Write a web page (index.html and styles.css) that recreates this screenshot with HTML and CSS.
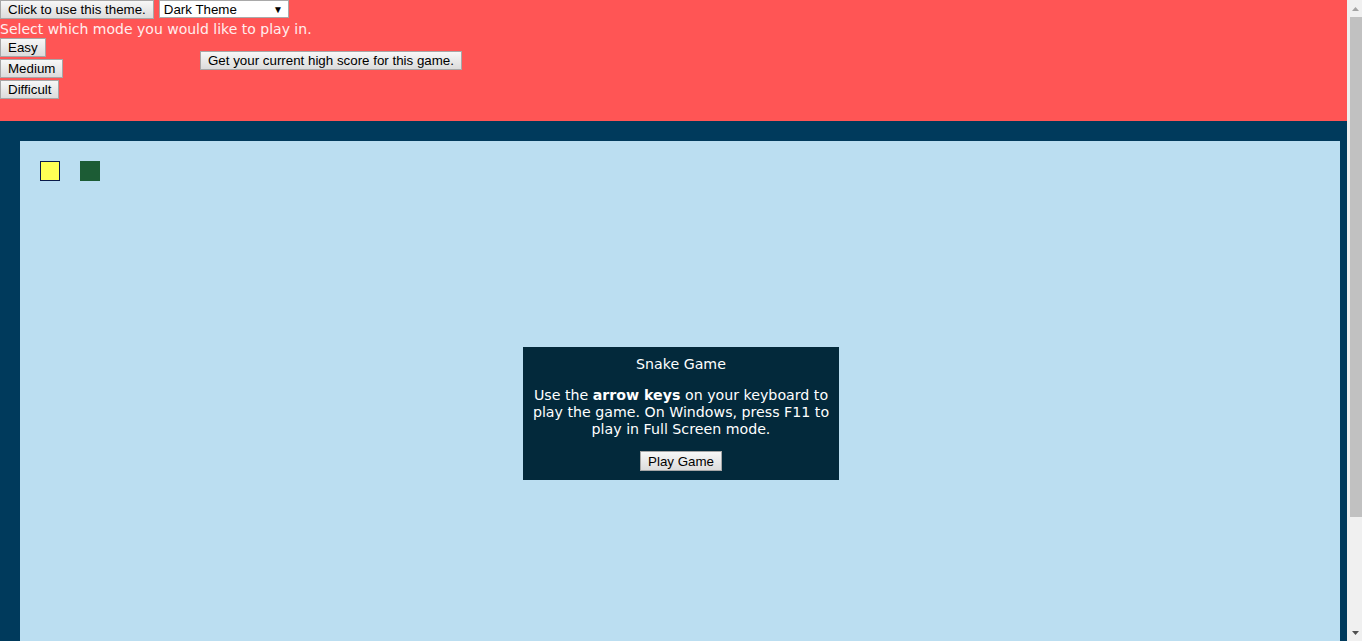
FILE: index.html
```html
<!DOCTYPE html>
<html>
<head>
<meta charset="utf-8">
<title>Snake Game</title>
<link rel="stylesheet" href="styles.css">
</head>
<body>
<div class="page">
<header class="top">
  <div class="theme-row">
    <button class="btn">Click to use this theme.</button>
    <div class="select"><span>Dark Theme</span><span class="arrow">&#9660;</span></div>
  </div>
  <div class="prompt">Select which mode you would like to play in.</div>
  <div class="modes">
    <div class="mode-list">
      <button class="btn">Easy</button>
      <button class="btn">Medium</button>
      <button class="btn">Difficult</button>
    </div>
    <button class="btn score-btn">Get your current high score for this game.</button>
  </div>
</header>
<main class="frame">
  <div class="board">
    <div class="cell food"></div>
    <div class="cell snake"></div>
  </div>
  <div class="dialog">
    <div class="dialog-title">Snake Game</div>
    <p class="dialog-text">Use the <b>arrow keys</b> on your keyboard to play the game. On Windows, press F11 to play in Full Screen mode.</p>
    <button class="btn">Play Game</button>
  </div>
</main>
</div>
<div class="scrollbar">
  <div class="sb-btn"><svg width="7" height="4" viewBox="0 0 7 4"><polygon points="0,4 3.5,0 7,4" fill="#a3a3a3"/></svg></div>
  <div class="sb-thumb"></div>
  <div class="sb-track"></div>
  <div class="sb-btn"><svg width="7" height="4" viewBox="0 0 7 4"><polygon points="0,0 7,0 3.5,4" fill="#505050"/></svg></div>
</div>
</body>
</html>
```
FILE: styles.css
```css
html, body {
  margin: 0;
  padding: 0;
  overflow: hidden;
}
body {
  font-family: "DejaVu Sans", Verdana, sans-serif;
  display: flex;
  height: 100vh;
}
.page {
  flex: 1;
  min-width: 0;
  overflow: hidden;
}
.scrollbar {
  width: 15px;
  flex: none;
  background: #f0f0f0;
  display: flex;
  flex-direction: column;
}
.sb-btn {
  height: 17px;
  display: flex;
  align-items: center;
  justify-content: center;
  padding-left: 2px;
}
.sb-thumb {
  height: 500px;
  margin-left: 3px;
  background: #c1c1c1;
}
.sb-track {
  flex: 1;
}
.top {
  background: #ff5555;
  height: 121px;
  box-sizing: border-box;
}
.btn {
  font-family: "Liberation Sans", Arial, sans-serif;
  font-size: 13.33px;
  color: #000;
  background: linear-gradient(#f7f7f7, #dcdcdc);
  border: 1px solid #a7a7a7;
  border-radius: 0;
  padding: 0 7px;
  height: 19px;
  line-height: 17px;
  margin: 0;
  display: block;
  cursor: default;
}
.theme-row {
  display: flex;
  align-items: flex-start;
  gap: 5px;
}
.select {
  width: 130px;
  height: 18px;
  box-sizing: border-box;
  background: #fff;
  border: 1px solid #a9a9a9;
  display: flex;
  justify-content: space-between;
  align-items: center;
  padding: 0 4px;
  font-family: "Liberation Sans", Arial, sans-serif;
  font-size: 13.33px;
  color: #000;
}
.select .arrow {
  font-size: 10px;
  padding-right: 1px;
}
.prompt {
  color: #ffeeee;
  font-size: 14px;
  line-height: 19px;
  height: 19px;
  padding-top: 1px;
  box-sizing: border-box;
}
.modes {
  display: flex;
  align-items: flex-start;
}
.mode-list {
  width: 200px;
  display: flex;
  flex-direction: column;
  align-items: flex-start;
  gap: 2px;
}
.score-btn {
  margin-top: 13px;
}
.frame {
  background: #003a5c;
  padding: 20px 7px 20px 20px;
  position: relative;
}
.board {
  background: #bbdef1;
  height: 789px;
  position: relative;
}
.cell {
  position: absolute;
  top: 20px;
  width: 20px;
  height: 20px;
  box-sizing: border-box;
}
.food {
  left: 20px;
  background: #ffff55;
  border: 1px solid #0a1a4a;
}
.snake {
  left: 60px;
  background: #1c5c35;
}
.dialog {
  position: absolute;
  left: 523px;
  top: 226px;
  width: 316px;
  height: 133px;
  box-sizing: border-box;
  background: #03293b;
  color: #fff;
  text-align: center;
  font-size: 14.2px;
  line-height: 17px;
  padding: 9px 8px 8px;
  display: flex;
  flex-direction: column;
  align-items: center;
}
.dialog-title {
  height: 17px;
}
.dialog-text {
  margin: 14px 0 0;
}
.dialog .btn {
  margin-top: 13px;
  height: 20px;
}
```
